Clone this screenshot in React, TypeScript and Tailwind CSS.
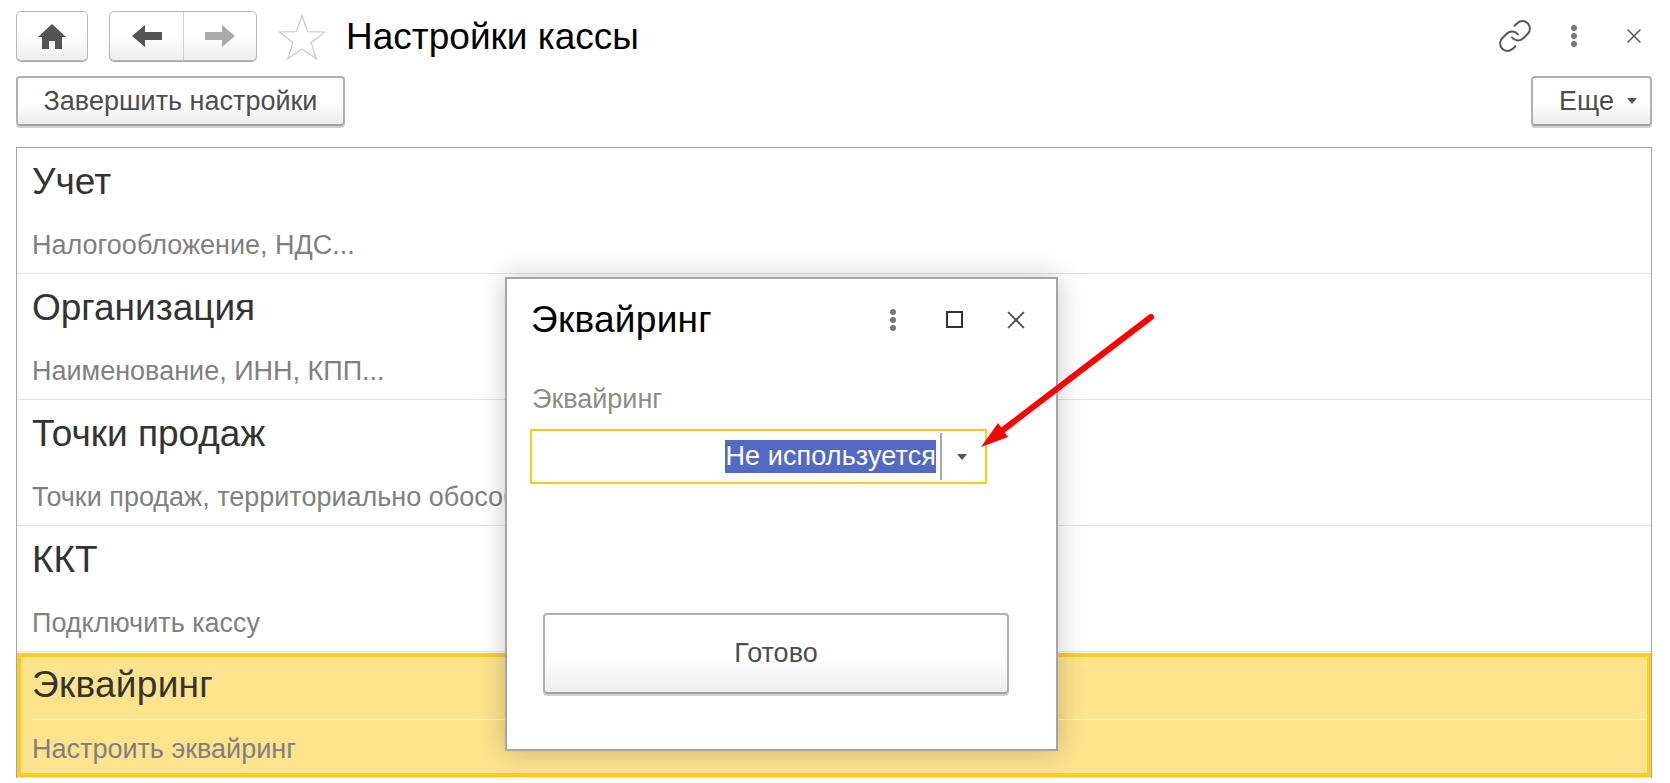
import { Link, X } from 'lucide-react'

const rows = [
  { title: 'Учет', sub: 'Налогообложение, НДС...' },
  { title: 'Организация', sub: 'Наименование, ИНН, КПП...' },
  { title: 'Точки продаж', sub: 'Точки продаж, территориально обособленные подразделения...' },
  { title: 'ККТ', sub: 'Подключить кассу' },
]

const btn =
  'rounded-[4px] border-2 border-[#b0b0b0] border-b-[#a0a0a0] bg-[linear-gradient(180deg,#ffffff_55%,#ececec)] shadow-[0_2px_0_#cfcfcf] text-[#4d4d4d]'

function Caret({ className }: { className: string }) {
  return (
    <svg width="10" height="6" viewBox="0 0 10 6" className={className}>
      <path d="M0 0h10L5 6z" fill="#555" />
    </svg>
  )
}

function Dots({ className }: { className: string }) {
  return (
    <svg width="6" height="22" viewBox="0 0 6 22" className={className}>
      <circle cx="3" cy="3" r="3" fill="#777" />
      <circle cx="3" cy="11" r="3" fill="#777" />
      <circle cx="3" cy="19" r="3" fill="#777" />
    </svg>
  )
}

export default function App() {
  return (
    <div className="relative h-[783px] w-[1670px] overflow-hidden bg-white font-['Liberation_Sans',Arial,sans-serif]">
      <div className="flex h-[76px] items-start pl-4 pr-[24px] pt-[11px]">
        <button className="flex h-[50px] w-[72px] items-center justify-center rounded-[5px] border border-[#b8b8b8] bg-[linear-gradient(180deg,#ffffff_50%,#eeeeee)] shadow-[0_1px_0_#a8a8a8]">
          <svg width="30" height="26" viewBox="0 0 30 26">
            <path d="M15 1 29 14h-4v12h-7v-8h-6v8H5V14H1z" fill="#555" />
          </svg>
        </button>
        <div className="ml-[21px] flex h-[50px] w-[148px] rounded-[5px] border border-[#b8b8b8] bg-[linear-gradient(180deg,#ffffff_50%,#eeeeee)] shadow-[0_1px_0_#a8a8a8]">
          <div className="flex w-[74px] items-center justify-center border-r border-[#d0d0d0]">
            <svg width="30" height="22" viewBox="0 0 30 22">
              <path d="M0 11 13 0v7h17v8H13v7z" fill="#555" />
            </svg>
          </div>
          <div className="flex flex-1 items-center justify-center">
            <svg width="30" height="22" viewBox="0 0 30 22">
              <path d="M30 11 17 0v7H0v8h17v7z" fill="#aaa" />
            </svg>
          </div>
        </div>
        <svg width="48" height="46" viewBox="0 0 48 46" className="ml-[21px] mt-[3px]">
          <path
            d="M24 1.5 29.7 17.6 46.8 18 33.2 28.4 38.1 44.7 24 35 9.900 44.7 14.800 28.400 1.200 18 18.300 17.600z"
            fill="#fff"
            stroke="#c4cad0"
            strokeWidth="1.200"
          />
        </svg>
        <h1 className="ml-[20px] mt-[1px] text-[37px] leading-[50px] text-black">Настройки кассы</h1>
        <div className="ml-auto flex h-[50px] items-center text-[#555]">
          <Link size={36} strokeWidth={1.3} className="mr-[38px]" />
          <Dots className="mr-[45px]" />
          <X size={24} strokeWidth={1.5} />
        </div>
      </div>

      <div className="flex h-[71px] items-start justify-between pl-4 pr-[18px]">
        <button className={`${btn} h-[50px] w-[329px] text-[27px]`}>Завершить настройки</button>
        <button className={`${btn} flex h-[50px] w-[121px] items-center pl-[26px] text-[27px]`}>
          Еще
          <Caret className="ml-[13px]" />
        </button>
      </div>

      <div className="ml-4 mr-[18px] border-x border-t border-[#a5a5a5]">
        {rows.map((row) => (
          <div key={row.title} className="h-[126px] border-b border-[#e3e3e3] pl-[15px]">
            <div className="flex h-[67px] items-center text-[37px] text-[#333]">{row.title}</div>
            <div className="flex h-[58px] items-center pt-[2px] text-[27px] text-[#808080]">{row.sub}</div>
          </div>
        ))}
        <div className="mt-[1px] h-[124px] border-4 border-[#fccb22] bg-[#fde38c] pl-[11px]">
          <div className="flex h-[63px] items-center border-b border-[#fff6d8] pb-[7px] text-[37px] tracking-[0.3px] text-[#333]">
            Эквайринг
          </div>
          <div className="flex h-[52px] items-center pt-[6px] text-[27px] text-[#808080]">Настроить эквайринг</div>
        </div>
        <div className="border-t border-[#e3e3e3]" />
      </div>

      {/* dialog */}
      <div className="absolute left-[505px] top-[277px] flex h-[474px] w-[553px] flex-col border-2 border-[#a5a5a5] bg-white px-[23px] shadow-[0_0_24px_rgba(0,0,0,0.22)]">
        <div className="flex h-[81px] items-center">
          <div className="ml-[1px] text-[37px] tracking-[0.3px] text-black">Эквайринг</div>
          <Dots className="ml-auto mr-[50px]" />
          <div className="mr-[38px] h-[17px] w-[17px] border-2 border-[#333]" />
          <X size={30} strokeWidth={1.4} className="mr-[2px] text-[#444]" />
        </div>
        <div className="mt-[21px] pl-[2px] text-[27px] leading-[36px] text-[#8f8b85]">Эквайринг</div>
        <div className="mt-[12px] flex h-[55px] w-[457px] items-center justify-end border-2 border-[#fcc81d]">
          <span className="bg-[#5469c4] text-[27px] leading-[33px] tracking-[0.1px] text-white">Не используется</span>
          <div className="ml-[4px] h-[47px] w-[2px] bg-[#a8a8a8]" />
          <div className="flex w-[43px] justify-center pr-[4px]">
            <Caret className="" />
          </div>
        </div>
        <button className={`${btn} ml-[13px] mt-[129px] h-[81px] w-[466px] text-[27px]`}>Готово</button>
      </div>

      {/* red arrow */}
      <svg width="1670" height="783" className="pointer-events-none absolute left-0 top-0">
        <path d="M1151 317 995 436" stroke="#ff0000" strokeWidth="6" strokeLinecap="round" />
        <path d="M981 447 998 423 1008 437z" fill="#ff0000" />
      </svg>
    </div>
  )
}
